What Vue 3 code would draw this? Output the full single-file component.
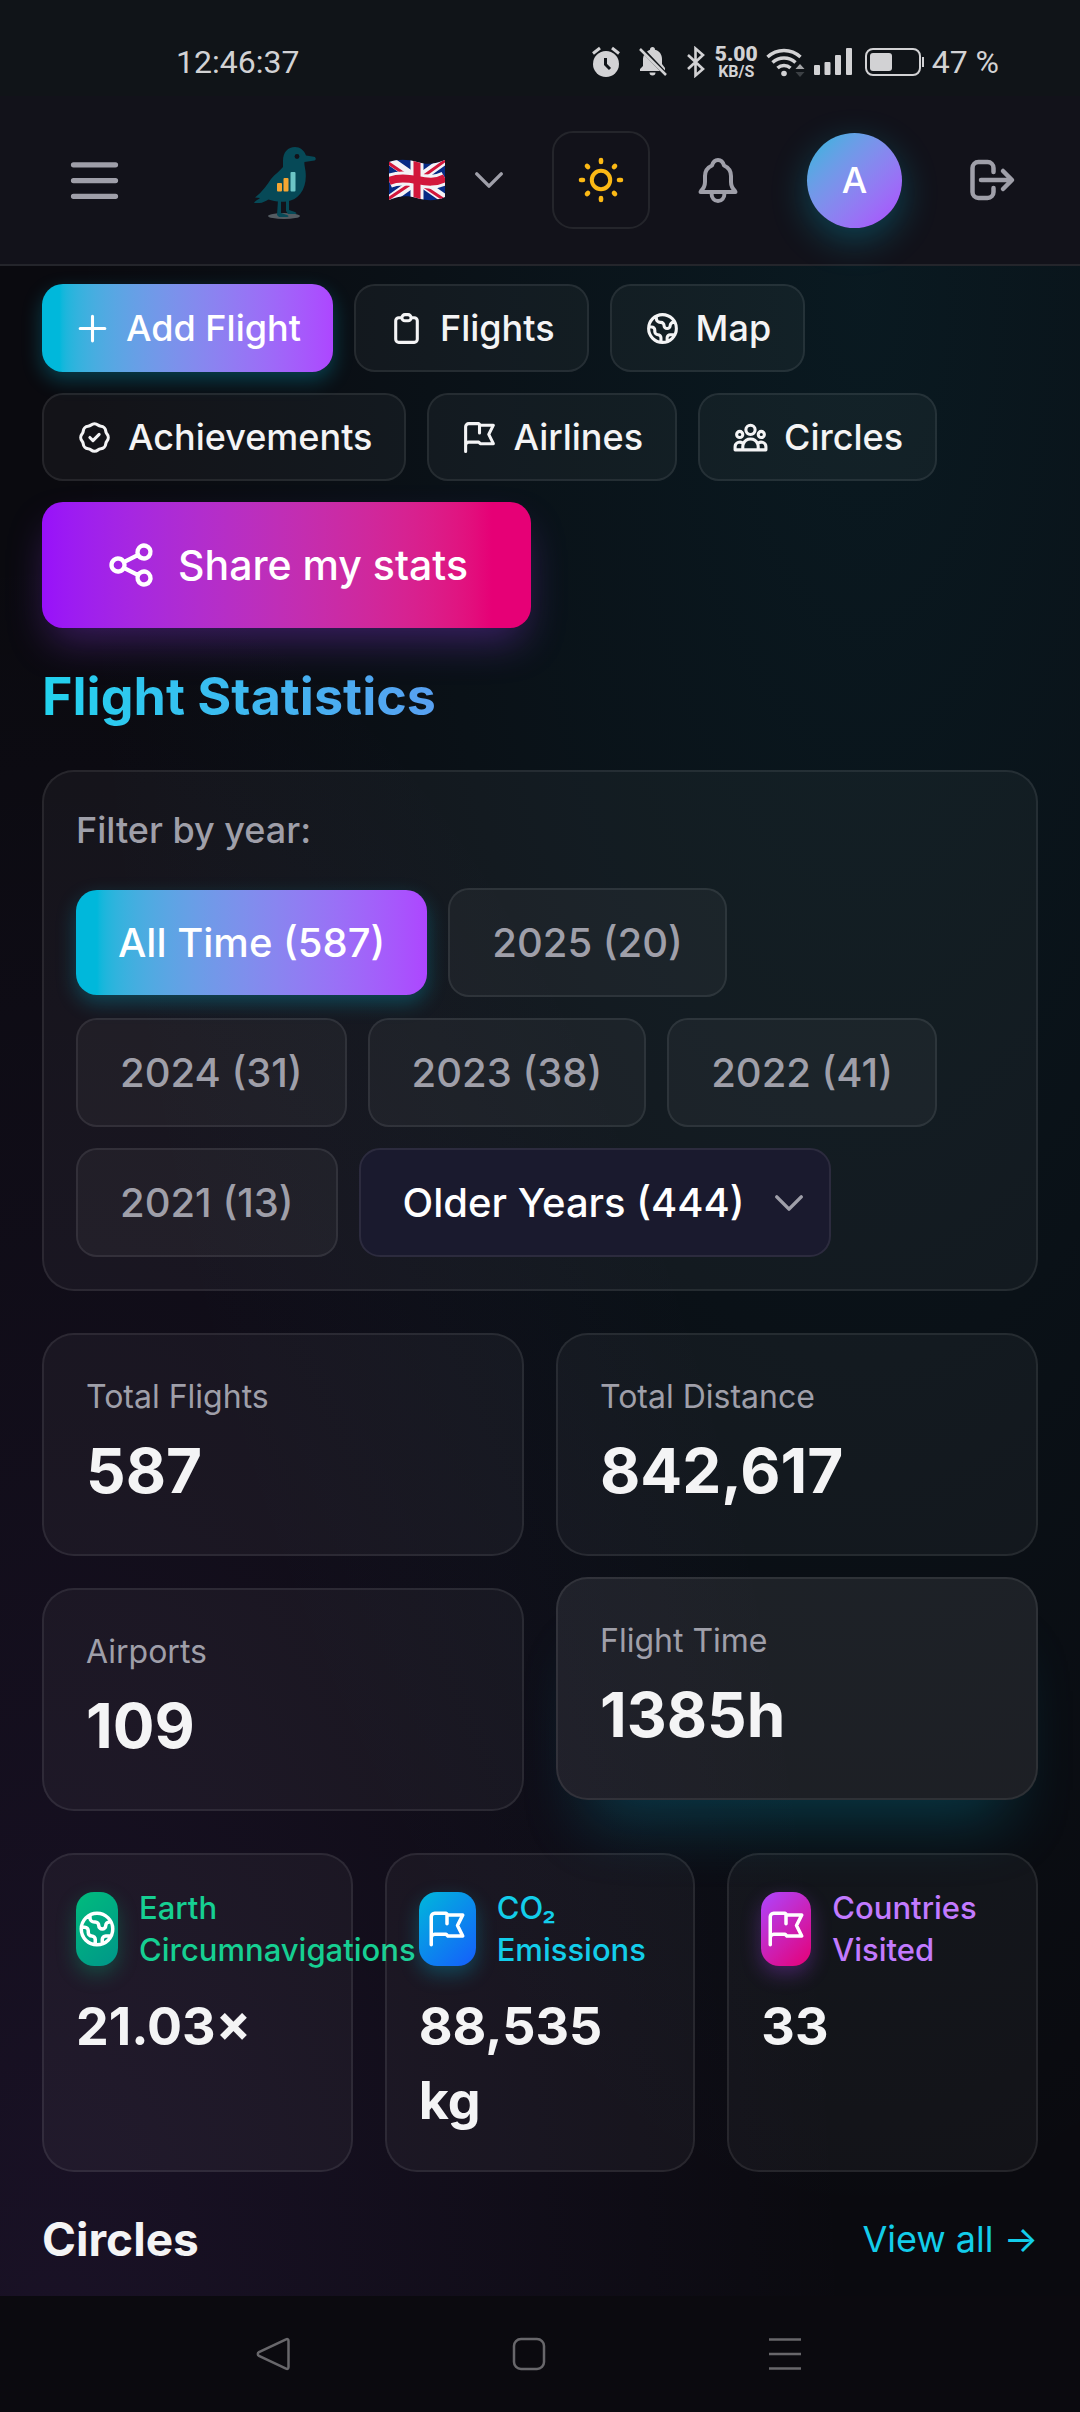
<template>
  <div class="page">
    <!-- Phone status bar -->
    <div class="status-bar">
      <span class="status-time">12:46:37</span>
      <div class="status-icons">
        <svg class="status-alarm" width="28" height="32" viewBox="0 0 28 32" fill="none">
          <circle cx="14" cy="18" r="13" fill="#d2d2d4" />
          <path d="M1 7.500L8 2M27 7.500L20 2" stroke="#d2d2d4" stroke-width="3" />
          <path d="M13.500 12v6.500l4.500 4.500" stroke="#101418" stroke-width="3" />
        </svg>
        <svg class="status-muted" width="30" height="32" viewBox="0 0 30 32" fill="#d2d2d4">
          <path d="M2 25v-2l3-3v-7c0-1.500.4-3 1.100-4.200L22 25zM9 5.500c1-.8 2-1.400 3-1.700C12 2 13 1 14.500 1S17 2 17 3.800c4.500 1.200 7 4.700 7 9.200v5l3 4v2.500zM11.500 26.500h6a3 3 0 0 1-6 0z" />
          <path d="M2 3l26 26" stroke="#d2d2d4" stroke-width="2.500" />
        </svg>
        <svg width="20" height="32" viewBox="0 0 20 32" fill="none" stroke="#d2d2d4" stroke-width="2.600">
          <path d="M2 9l15 14-7.500 6.500V2.500L17 9 2 23" />
        </svg>
        <span class="net-speed"><b>5.00</b><small>KB/S</small></span>
        <svg class="status-wifi" width="40" height="32" viewBox="0 0 40 32" fill="none" stroke="#d2d2d4" stroke-width="3.400">
          <path d="M1.500 11a24 24 0 0 1 33 0M6.500 16.500a17 17 0 0 1 23 0M11.500 22a9.500 9.500 0 0 1 13 0" />
          <circle cx="18" cy="27.500" r="2.800" fill="#d2d2d4" stroke="none" />
          <path d="M29.500 23l4.500-5 4.500 5z" fill="#a5a6a8" stroke="none" />
          <path d="M29.500 26l4.500 5 4.500-5z" fill="#3c4044" stroke="none" />
        </svg>
        <svg class="status-signal" width="38" height="28" viewBox="0 0 38 28" fill="#d2d2d4">
          <rect x="0" y="17" width="6" height="10" rx="1" />
          <rect x="10.500" y="14" width="6" height="13" rx="1" />
          <rect x="21" y="7" width="6" height="20" rx="1" />
          <rect x="32" y="0" width="6" height="27" rx="1" />
        </svg>
        <svg class="status-battery" width="60" height="28" viewBox="0 0 60 28" fill="none">
          <rect x="1" y="1" width="54" height="26" rx="7" stroke="#d2d2d4" stroke-width="2" />
          <rect x="5" y="5" width="22" height="18" rx="3" fill="#d2d2d4" />
          <path d="M58 9v10" stroke="#d2d2d4" stroke-width="2" />
        </svg>
        <span>47 %</span>
      </div>
    </div>

    <header class="app-header">
      <button class="icon-button" aria-label="Menu">
        <svg class="icon-lg" viewBox="0 0 24 24"><path d="M4 6h16M4 12h16M4 18h16" /></svg>
      </button>

      <div class="header-right">
        <a href="#" class="logo" aria-label="Home">
          <svg width="62" height="80" viewBox="0 -7 62 80">
            <ellipse cx="30" cy="69" rx="16" ry="3" fill="#545c62" />
            <path
              d="M29 14C29 5 34 0 41 0c5 0 9 3 11 8.500l8 1.200c2 .3 2.500 3.300.5 3.800l-10 1.500c-.5 2 .5 5 1 9 2 17-6 29-19 30.500-8 .8-14-.5-18-2-3 1.500-6 3.500-9 3.500H0c1-2 4-3.500 6-5l-5-.5C8 45 13 38 17 32c4-5 9-8 12-12z"
              fill="#064957"
            />
            <path
              d="M24 53h3v13l6 2c2 .6 2 2 0 2h-8l-2-2zM32 52h3v11l6 2c2 .8 2 2 0 2h-7l-2-3z"
              fill="#064957"
            />
            <circle cx="43" cy="9.500" r="2.400" fill="#12121a" />
            <rect x="23" y="36" width="5" height="8.500" rx="1" fill="#f5a632" />
            <rect x="29.500" y="31" width="5" height="13.500" rx="1" fill="#f5a632" />
            <rect x="36.500" y="25" width="5" height="19.500" rx="1" fill="#6cc5c6" />
          </svg>
        </a>

        <button class="language" aria-label="Language: English">
          <svg width="56" height="42" viewBox="0 0 56 42">
            <defs>
              <clipPath id="flag-shape">
                <path d="M0 3c9-3 18-3 28 0s19 2 28-2v37c-9 4-18 4-28 1s-19-2-28 2z" />
              </clipPath>
            </defs>
            <g clip-path="url(#flag-shape)">
              <path d="M0 0h56v42H0z" fill="#062b85" />
              <path d="M0 1l56 39M0 41L56 1" stroke="#f3f3f6" stroke-width="9" />
              <path d="M-2 3l25 17M30 24l27 18M-1 40l24-16M32 19L57 1" stroke="#d2173b" stroke-width="3" />
              <path d="M28 0v42" stroke="#f3f3f6" stroke-width="13" />
              <path d="M0 22c9-4 18-3 28-1s19 3 28-2" fill="none" stroke="#f3f3f6" stroke-width="14" />
              <path d="M28 0v42" stroke="#d2173b" stroke-width="7" />
              <path d="M0 22c9-4 18-3 28-1s19 3 28-2" fill="none" stroke="#d2173b" stroke-width="8" />
            </g>
          </svg>
          <svg class="icon-md" viewBox="0 0 24 24"><path d="M5 8.500l7 7 7-7" /></svg>
        </button>

        <button class="theme-toggle" aria-label="Light theme">
          <svg width="46" height="46" viewBox="0 0 46 46" fill="none" stroke="#fcb915" stroke-linecap="round">
            <circle cx="23" cy="23" r="9.200" stroke-width="4" />
            <path
              d="M23 3v2M23 41v2M3 23h2M41 23h2M9 9l1 1M36 36l1 1M9 37l1-1M36 10l1-1"
              stroke-width="4.600"
            />
          </svg>
        </button>

        <button class="icon-button bell" aria-label="Notifications">
          <svg width="42" height="48" viewBox="0 0 42 48">
            <path
              d="M3.500 36h35M4 35c3-3 4-5 4-9v-6c0-5 2.500-8.500 7-10.500C16 6 18 4 21 4s5 2 6 5.500c4.500 2 7 5.500 7 10.500v6c0 4 1 6 4 9M14.500 37c0 5 3 8 6.500 8s6.500-3 6.500-8"
              stroke-width="4"
            />
          </svg>
        </button>

        <button class="avatar">A</button>

        <button class="icon-button logout" aria-label="Log out">
          <svg width="52" height="52" viewBox="0 0 52 52">
            <path
              d="M28.500 18v-4a6 6 0 0 0-6-6h-9a6 6 0 0 0-6 6v24a6 6 0 0 0 6 6h9a6 6 0 0 0 6-6v-4M16 26h30M38 17l9 9-9 9"
              stroke-width="4.500"
            />
          </svg>
        </button>
      </div>
    </header>

    <main class="content">
      <nav class="quick-nav">
        <a
          v-for="link in navLinks"
          :key="link.label"
          href="#"
          class="nav-link"
          :class="{ primary: link.primary }"
        >
          <svg class="icon-sm" viewBox="0 0 24 24"><path :d="icons[link.icon]" /></svg>
          {{ link.label }}
        </a>
        <button class="share-button">
          <svg class="icon-share" viewBox="0 0 24 24"><path :d="icons.share" /></svg>
          Share my stats
        </button>
      </nav>

      <h1 class="page-title">Flight Statistics</h1>

      <section class="card filter-card">
        <p class="filter-label" id="year-label">Filter by year:</p>
        <div class="year-list" role="group" aria-labelledby="year-label">
          <button
            v-for="year in years"
            :key="year.label"
            class="year-button"
            :class="{ active: year.label === selectedYear }"
            @click="selectedYear = year.label"
          >
            {{ year.label }} ({{ year.count }})
          </button>
          <div class="older-years">
            <select aria-label="Older years">
              <option>Older Years (444)</option>
            </select>
            <svg class="icon-md" viewBox="0 0 24 24"><path d="M5 8.500l7 7 7-7" /></svg>
          </div>
        </div>
      </section>

      <section class="stats-grid">
        <div
          v-for="stat in stats"
          :key="stat.label"
          class="card stat-card"
          :class="{ raised: stat.raised }"
        >
          <p class="stat-label">{{ stat.label }}</p>
          <p class="stat-value">{{ stat.value }}</p>
        </div>
      </section>

      <section class="fact-grid">
        <div v-for="fact in facts" :key="fact.label" class="card fact-card" :class="fact.theme">
          <div class="fact-head">
            <span class="fact-icon">
              <svg viewBox="0 0 24 24"><path :d="icons[fact.icon]" /></svg>
            </span>
            <p class="fact-label">{{ fact.label }}</p>
          </div>
          <p class="fact-value">{{ fact.value }}</p>
        </div>
      </section>

      <div class="circles-head">
        <h2>Circles</h2>
        <a href="#">View all →</a>
      </div>
    </main>

    <!-- Phone navigation bar -->
    <div class="system-nav">
      <button aria-label="Back">
        <svg width="34" height="34" viewBox="0 0 34 34">
          <path d="M30 2.500c1.500-1 2.500 0 2.500 1.500v26c0 1.500-1 2.500-2.500 1.500L3 19c-1.600-1-1.600-3 0-4z" />
        </svg>
      </button>
      <button aria-label="Home">
        <svg width="34" height="34" viewBox="0 0 34 34">
          <rect x="2" y="2" width="30" height="30" rx="7" />
        </svg>
      </button>
      <button aria-label="Recent apps">
        <svg width="34" height="34" viewBox="0 0 34 34"><path d="M1 2.500h32M1 17h32M1 31.500h32" /></svg>
      </button>
    </div>
  </div>
</template>

<script setup>
import { ref } from "vue";

const selectedYear = ref("All Time");

const icons = {
  plus: "M12 4v16m8-8H4",
  clipboard:
    "M9 5H7a2 2 0 00-2 2v12a2 2 0 002 2h10a2 2 0 002-2V7a2 2 0 00-2-2h-2M9 5a2 2 0 002 2h2a2 2 0 002-2M9 5a2 2 0 012-2h2a2 2 0 012 2",
  globe:
    "M3.055 11H5a2 2 0 012 2v1a2 2 0 002 2 2 2 0 012 2v2.945M8 3.935V5.500A2.500 2.500 0 0010.500 8h.5a2 2 0 012 2 2 2 0 104 0 2 2 0 012-2h1.064M15 20.488V18a2 2 0 012-2h3.064M21 12a9 9 0 11-18 0 9 9 0 0118 0z",
  badge:
    "M9 12l2 2 4-4M7.835 4.697a3.420 3.420 0 001.946-.806 3.420 3.420 0 014.438 0 3.420 3.420 0 001.946.806 3.420 3.420 0 013.138 3.138 3.420 3.420 0 00.806 1.946 3.420 3.420 0 010 4.438 3.420 3.420 0 00-.806 1.946 3.420 3.420 0 01-3.138 3.138 3.420 3.420 0 00-1.946.806 3.420 3.420 0 01-4.438 0 3.420 3.420 0 00-1.946-.806 3.420 3.420 0 01-3.138-3.138 3.420 3.420 0 00-.806-1.946 3.420 3.420 0 010-4.438 3.420 3.420 0 00.806-1.946 3.420 3.420 0 013.138-3.138z",
  flag: "M3 21v-4m0 0V5a2 2 0 012-2h6.500l1 1H21l-3 6 3 6h-8.500l-1-1H5a2 2 0 00-2 2zm9-13.500V9",
  users:
    "M17 20h5v-2a3 3 0 00-5.356-1.857M17 20H7m10 0v-2c0-.656-.126-1.283-.356-1.857M7 20H2v-2a3 3 0 015.356-1.857M7 20v-2c0-.656.126-1.283.356-1.857m0 0a5.002 5.002 0 019.288 0M15 7a3 3 0 11-6 0 3 3 0 016 0zm6 3a2 2 0 11-4 0 2 2 0 014 0zM7 10a2 2 0 11-4 0 2 2 0 014 0z",
  share:
    "M8.684 13.342C8.886 12.938 9 12.482 9 12c0-.482-.114-.938-.316-1.342m0 2.684a3 3 0 110-2.684m0 2.684l6.632 3.316m-6.632-6l6.632-3.316m0 0a3 3 0 105.367-2.684 3 3 0 00-5.367 2.684zm0 9.316a3 3 0 105.368 2.684 3 3 0 00-5.368-2.684z",
};

const navLinks = [
  { label: "Add Flight", icon: "plus", primary: true },
  { label: "Flights", icon: "clipboard" },
  { label: "Map", icon: "globe" },
  { label: "Achievements", icon: "badge" },
  { label: "Airlines", icon: "flag" },
  { label: "Circles", icon: "users" },
];

const years = [
  { label: "All Time", count: 587 },
  { label: "2025", count: 20 },
  { label: "2024", count: 31 },
  { label: "2023", count: 38 },
  { label: "2022", count: 41 },
  { label: "2021", count: 13 },
];

const stats = [
  { label: "Total Flights", value: "587" },
  { label: "Total Distance", value: "842,617" },
  { label: "Airports", value: "109" },
  { label: "Flight Time", value: "1385h", raised: true },
];

const facts = [
  { label: "Earth Circumnavigations", value: "21.03×", icon: "globe", theme: "green" },
  { label: "CO₂ Emissions", value: "88,535 kg", icon: "flag", theme: "blue" },
  { label: "Countries Visited", value: "33", icon: "flag", theme: "purple" },
];
</script>

<style>
body {
  margin: 0;
  background-color: #0a0a0f;
}
</style>

<style scoped>
* {
  box-sizing: border-box;
}

.page {
  display: flex;
  flex-direction: column;
  min-height: 100vh;
  font-family: Inter, "Liberation Sans", sans-serif;
  color: #f4f4f5;
  background:
    radial-gradient(ellipse at 80% 12%, rgba(6, 182, 212, 0.09), transparent 65%),
    radial-gradient(ellipse at 5% 100%, rgba(168, 85, 247, 0.1), transparent 55%),
    #0a0a0f;
}

p,
h1,
h2 {
  margin: 0;
}

button,
select {
  font: inherit;
  color: inherit;
  border: none;
  background: none;
  padding: 0;
  cursor: pointer;
}

a {
  text-decoration: none;
  color: inherit;
}

svg {
  flex-shrink: 0;
}

/* Status bar */
.status-bar {
  display: flex;
  justify-content: space-between;
  align-items: center;
  height: 96px;
  padding: 28px 81px 0 176px;
  background-color: #101418;
  color: #d2d2d4;
  font-family: Roboto, sans-serif;
  font-size: 32px;
  line-height: 36px;
}

.status-icons {
  display: flex;
  align-items: center;
}

.status-alarm,
.status-muted {
  margin-right: 18px;
}

.net-speed {
  display: flex;
  flex-direction: column;
  align-items: center;
  margin: 0 8px 0 9px;
  font-weight: 700;
}

.net-speed b {
  font-size: 21px;
  line-height: 20px;
}

.net-speed small {
  font-size: 16px;
  line-height: 16px;
}

.status-wifi {
  margin-right: 8px;
}

.status-signal {
  margin-right: 13px;
}

.status-battery {
  margin-right: 7px;
}

/* Header */
.app-header {
  display: flex;
  justify-content: space-between;
  align-items: center;
  height: 170px;
  padding: 0 42px;
  background-color: #12121a;
  border-bottom: 2px solid #24252b;
}

.header-right {
  display: flex;
  align-items: center;
}

.app-header svg,
.quick-nav svg,
.older-years svg,
.fact-icon svg {
  display: block;
}

.icon-button {
  display: flex;
  align-items: center;
  justify-content: center;
  height: 94px;
  padding: 0 21px;
}

.icon-button svg,
.icon-lg,
.icon-md,
.icon-sm,
.icon-share,
.fact-icon svg {
  fill: none;
  stroke: currentColor;
  stroke-width: 2;
  stroke-linecap: round;
  stroke-linejoin: round;
}

.icon-button,
.language,
.older-years svg {
  color: #9f9fa9;
}

.icon-lg {
  width: 63px;
  height: 63px;
}

.icon-md {
  width: 42px;
  height: 42px;
}

.icon-sm {
  width: 37px;
  height: 37px;
}

.icon-share {
  width: 52px;
  height: 52px;
}

.logo {
  margin-right: 73px;
}

.language {
  display: flex;
  align-items: center;
  gap: 23px;
  margin-right: 42px;
}

.theme-toggle {
  display: flex;
  align-items: center;
  justify-content: center;
  width: 98px;
  height: 98px;
  margin-right: 21px;
  border: 2px solid #24252b;
  border-radius: 21px;
}

.bell {
  width: 94px;
}

.avatar {
  width: 95px;
  height: 95px;
  margin: 0 42px;
  border-radius: 50%;
  background: linear-gradient(135deg in oklab, #00b8db, #ad46ff);
  box-shadow: 0 12px 36px rgba(0, 184, 219, 0.3);
  color: #fff;
  font-size: 36px;
  font-weight: 500;
}

/* Content */
.content {
  flex: 1;
  padding: 18px 42px 24px;
}

.quick-nav {
  display: flex;
  flex-wrap: wrap;
  gap: 21px;
}

.nav-link {
  display: flex;
  align-items: center;
  gap: 15px;
  height: 88px;
  padding: 0 32px;
  border: 2px solid rgba(255, 255, 255, 0.08);
  border-radius: 21px;
  background-color: rgba(255, 255, 255, 0.04);
  font-size: 36px;
  font-weight: 500;
}

.nav-link.primary {
  border: none;
  background: linear-gradient(to right in oklab, #00b8db 6%, #ad46ff);
  box-shadow: 0 8px 20px rgba(0, 184, 219, 0.3);
  color: #fff;
}

.share-button {
  display: flex;
  align-items: center;
  gap: 21px;
  height: 126px;
  padding: 0 63px;
  border-radius: 21px;
  background: linear-gradient(to right in oklab, #9810fa, #e60076 92%);
  box-shadow: 0 20px 40px -8px rgba(152, 60, 250, 0.35);
  color: #fff;
  font-size: 41px;
  font-weight: 500;
}

.page-title {
  margin: 37px 0 41px;
  font-size: 52px;
  line-height: 64px;
  font-weight: 700;
  color: transparent;
  background: linear-gradient(to right, #22d3ee, #5c9df2 42%, #c27aff);
  background-clip: text;
}

.card {
  border: 2px solid rgba(255, 255, 255, 0.08);
  border-radius: 32px;
  background-color: rgba(255, 255, 255, 0.04);
}

.filter-card {
  padding: 32px;
}

.filter-label {
  margin-bottom: 32px;
  color: #9f9fa9;
  font-size: 36px;
  line-height: 52px;
  font-weight: 500;
}

.year-list {
  display: flex;
  flex-wrap: wrap;
  align-items: center;
  gap: 21px;
}

.year-button {
  height: 109px;
  padding: 0 42px;
  border: 2px solid rgba(255, 255, 255, 0.08);
  border-radius: 21px;
  background-color: rgba(255, 255, 255, 0.04);
  color: #9f9fa9;
  font-size: 40px;
  font-weight: 500;
}

.year-button.active {
  height: 105px;
  border: none;
  background: linear-gradient(to right in oklab, #00b8db 6%, #ad46ff);
  box-shadow: 0 8px 20px rgba(0, 184, 219, 0.3);
  color: #fff;
}

.older-years {
  position: relative;
}

.older-years select {
  height: 109px;
  padding: 0 84px 0 42px;
  border: 2px solid #2c2b3e;
  border-radius: 21px;
  background-color: #1a1a2e;
  color: #fff;
  font-size: 40px;
  font-weight: 500;
  appearance: none;
}

/* Chevron over the select */
.older-years svg {
  position: absolute;
  top: 34px;
  right: 21px;
  pointer-events: none;
}

.stats-grid {
  display: grid;
  grid-template-columns: repeat(2, 1fr);
  gap: 32px;
  margin-top: 42px;
}

.stat-card {
  padding: 41px 42px;
}

.stat-card.raised {
  transform: translateY(-11px);
  background-color: rgba(255, 255, 255, 0.08);
  box-shadow: 0 52px 64px -32px rgba(0, 184, 219, 0.25);
}

.stat-label {
  margin-bottom: 11px;
  color: #9f9fa9;
  font-size: 32px;
  line-height: 42px;
}

.stat-value {
  font-size: 62px;
  line-height: 84px;
  font-weight: 700;
}

.fact-grid {
  display: grid;
  grid-template-columns: repeat(3, minmax(0, 1fr));
  gap: 32px;
  margin-top: 42px;
}

.fact-card {
  padding: 32px;
}

.fact-head {
  display: flex;
  align-items: center;
  gap: 21px;
  margin-bottom: 19px;
}

.fact-icon {
  display: flex;
  flex-shrink: 0;
  align-items: center;
  justify-content: center;
  height: 74px;
  border-radius: 18px;
  color: #fff;
}

.fact-icon svg {
  width: 42px;
  height: 42px;
}

.fact-label {
  font-size: 31px;
  line-height: 42px;
  font-weight: 500;
}

.fact-value {
  font-size: 52px;
  line-height: 74px;
  font-weight: 700;
}

.green .fact-icon {
  width: 42px;
  background: linear-gradient(135deg, #00bc7d, #009689);
  box-shadow: 0 8px 20px rgba(0, 188, 125, 0.3);
}

.green .fact-label {
  color: #16cf92;
}

.blue .fact-icon {
  width: 57px;
  background: linear-gradient(135deg, #00b8db, #155dfc);
  box-shadow: 0 8px 20px rgba(0, 184, 219, 0.3);
}

.blue .fact-label {
  color: #13cdea;
}

.purple .fact-icon {
  width: 50px;
  background: linear-gradient(135deg, #ad46ff, #e60076);
  box-shadow: 0 8px 20px rgba(173, 70, 255, 0.3);
}

.purple .fact-label {
  color: #c27aff;
}

.circles-head {
  display: flex;
  justify-content: space-between;
  align-items: center;
  margin-top: 37px;
}

.circles-head h2 {
  font-size: 46px;
  line-height: 60px;
  font-weight: 700;
}

.circles-head a {
  color: #13cdea;
  font-size: 36px;
}

/* System navigation */
.system-nav {
  display: flex;
  justify-content: space-between;
  align-items: center;
  height: 116px;
  padding: 0 278px 0 256px;
  background-color: #0b0a0f;
}

.system-nav svg {
  display: block;
  fill: none;
  stroke: #68676b;
  stroke-width: 2.500;
}
</style>
